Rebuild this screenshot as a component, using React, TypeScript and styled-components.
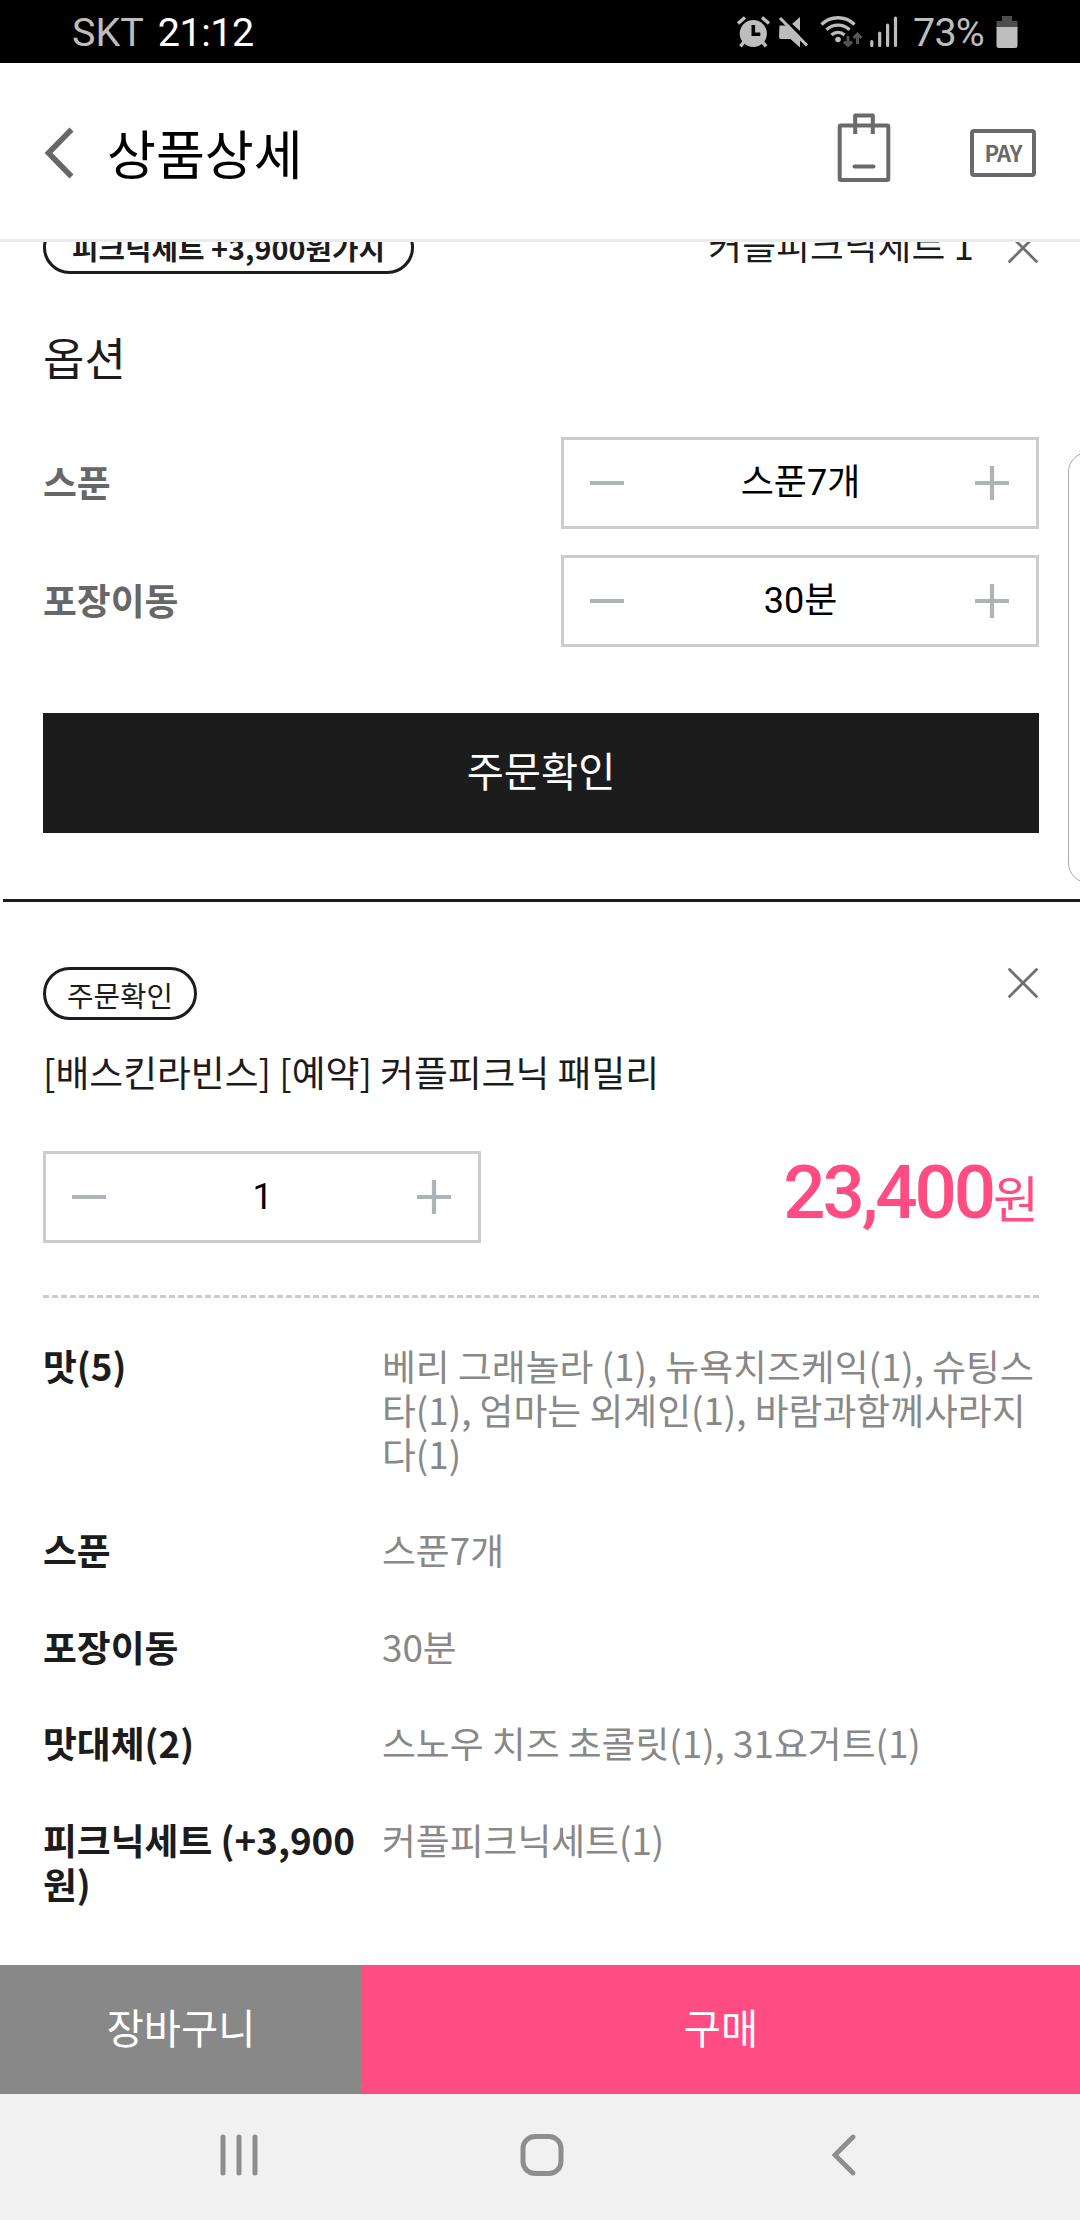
import React from 'react';
import styled, { createGlobalStyle } from 'styled-components';

const noto = `'Noto Sans CJK KR', 'Noto Sans KR', sans-serif`;
const roboto = `Roboto, 'Noto Sans CJK KR', sans-serif`;

const GlobalStyle = createGlobalStyle`
  * { box-sizing: border-box; }
  body { margin: 0; background: #fff; font-family: ${noto}; color: #1c1c1c; }
  button { border: 0; padding: 0; margin: 0; background: none; font: inherit; color: inherit; }
`;

const Screen = styled.div`
  width: 1080px;
  height: 2220px;
  display: flex;
  flex-direction: column;
  overflow: hidden;
  position: relative;
  background: #fff;
`;

const StatusBar = styled.div`
  height: 63px;
  flex: none;
  background: #000;
  display: flex;
  align-items: center;
  justify-content: space-between;
  padding: 2px 62px 0 72px;
  font-family: ${roboto};
  font-size: 39.5px;
  line-height: 60px;
  color: #bdbdbd;
`;

const StatusGroup = styled.div`
  display: flex;
  align-items: center;

  svg {
    margin-bottom: 1px;
  }
`;

const Clock = styled.span`
  color: #fff;
  margin-left: 14px;
  letter-spacing: -0.5px;
`;

const Percent = styled.span`
  margin: 0 12px 0 15px;
  letter-spacing: -0.8px;
`;

const Header = styled.header`
  height: 179px;
  flex: none;
  display: flex;
  align-items: center;
  border-bottom: 3px solid #ebebeb;
  padding: 4px 44px 0 44px;
`;

const HeaderTitle = styled.h1`
  flex: 1;
  margin: 0 0 3px 32px;
  font-weight: 400;
  font-size: 53.2px;
  line-height: 60px;
  color: #000;
`;

const IconButton = styled.button`
  display: flex;
`;

const BagButton = styled(IconButton)`
  margin-bottom: 11px;
`;

const PayIcon = styled.span`
  display: flex;
  align-items: center;
  justify-content: center;
  width: 66px;
  height: 48px;
  margin-left: 79px;
  margin-bottom: 1px;
  padding-bottom: 2px;
  border: 4px solid #6a6a6a;
  border-radius: 4px;
  font-size: 22px;
  font-weight: 700;
  line-height: 22px;
  color: #6a6a6a;
  letter-spacing: -0.9px;
`;

const Main = styled.main`
  flex: 1;
  min-height: 0;
  overflow: hidden;
`;

const Section = styled.section`
  padding: 0 41px 0 43px;
  display: flex;
  flex-direction: column;
`;

const PickedRow = styled.div`
  display: flex;
  align-items: center;
  height: 53px;
  margin-top: -21px;
`;

const Pill = styled.span<{ $strong?: boolean }>`
  display: flex;
  align-items: center;
  justify-content: center;
  height: 53px;
  width: ${(p) => (p.$strong ? 371 : 154)}px;
  padding-top: ${(p) => (p.$strong ? 0 : 3)}px;
  border: 3px solid #1c1c1c;
  border-radius: 27px;
  font-size: 28.8px;
  line-height: 40px;
  font-weight: ${(p) => (p.$strong ? 700 : 400)};
  white-space: nowrap;
`;

const PickedName = styled.span`
  margin: 0 33px 8px auto;
  font-size: 36.8px;
  line-height: 44px;
  white-space: nowrap;
`;

const OptionTitle = styled.h2`
  margin: 53px 0 1px;
  font-size: 45px;
  line-height: 60px;
  font-weight: 400;
`;

const OptionList = styled.div`
  margin-top: 49px;
  display: flex;
  flex-direction: column;
  gap: 26px;
`;

const OptionRow = styled.div`
  display: flex;
  align-items: center;
  justify-content: space-between;
`;

const OptionLabel = styled.span`
  margin-bottom: 4px;
  font-size: 36.8px;
  line-height: 44px;
  font-weight: 700;
  color: #676767;
`;

const StepperBox = styled.div<{ $width: number }>`
  display: flex;
  align-items: center;
  justify-content: space-between;
  width: ${(p) => p.$width}px;
  height: 92px;
  padding: 0 27px 0 26px;
  border: 3px solid #ccc;
`;

const StepperValue = styled.span`
  margin-left: 2px;
  font-family: ${roboto};
  font-size: 36px;
  line-height: 44px;
  color: #000;
`;

const ConfirmButton = styled.button`
  margin-top: 66px;
  height: 120px;
  background: #1c1c1c;
  color: #fff;
  font-size: 40.4px;
  line-height: 60px;
  padding-bottom: 6px;
`;

const Divider = styled.div`
  height: 3px;
  margin: 66px 0 65px 3px;
  background: #1c1c1c;
`;

const OrderHead = styled.div`
  display: flex;
  align-items: flex-start;
  justify-content: space-between;
`;

const OrderName = styled.div`
  margin-top: 29px;
  font-size: 36.8px;
  line-height: 44px;
  white-space: nowrap;
`;

const PriceRow = styled.div`
  margin-top: 58px;
  display: flex;
  justify-content: space-between;
  height: 147px;
  border-bottom: 3px dashed #ccc;
`;

const Price = styled.div`
  display: flex;
  align-items: baseline;
  height: 92px;
  margin-top: -4px;
  line-height: 92px;
  color: #ff4c82;
`;

const Amount = styled.span`
  font-family: Roboto, sans-serif;
  font-size: 74.5px;
  font-weight: 500;
  letter-spacing: -3.1px;
`;

const Won = styled.span`
  font-size: 50px;
  font-weight: 400;
`;

const Details = styled.dl`
  margin: 45px 0 0;
  display: grid;
  grid-template-columns: 339px 1fr;
  row-gap: 52.4px;
  font-size: 36.8px;
  line-height: 44px;
`;

const Term = styled.dt`
  font-weight: 700;
  padding-right: 20px;
`;

const Desc = styled.dd`
  margin: 0;
  color: #888;
  word-break: break-all;
`;

const Actions = styled.div`
  flex: none;
  height: 129px;
  display: grid;
  grid-template-columns: 362px 1fr;
`;

const ActionButton = styled.button<{ $primary?: boolean }>`
  background: ${(p) => (p.$primary ? '#ff4c82' : '#888')};
  color: #fff;
  font-size: 40.4px;
  line-height: 60px;
  padding-bottom: 6px;
`;

const NavBar = styled.nav`
  flex: none;
  height: 126px;
  background: #f1f1f1;
  display: flex;
  align-items: center;
  justify-content: space-between;
  padding: 0 223px 4px 220px;

  svg:nth-child(2) {
    margin-right: 5px;
  }
`;

const EdgeHandle = styled.div`
  position: absolute;
  left: 1068px;
  top: 452px;
  width: 60px;
  height: 431px;
  border: 1.5px solid #ababab;
  border-radius: 20px;
  background: #fff;
`;

const AlarmIcon = () => (
  <svg width="33" height="32" viewBox="0 0 33 32">
    <circle cx="16.3" cy="17.5" r="13.6" fill="#bdbdbd" />
    <path d="M1 7.5L8 1.5M32 7.5L25 1.5" stroke="#bdbdbd" strokeWidth="3.4" />
    <path d="M7 26l-3.6 4.4M25.5 26l3.6 4.4" stroke="#bdbdbd" strokeWidth="3.4" />
    <path d="M16.3 9v9.2h7" stroke="#000" strokeWidth="3.6" fill="none" />
  </svg>
);

const MuteSvg = styled.svg`
  margin-left: 8px;
`;

const MuteIcon = () => (
  <MuteSvg width="31" height="32" viewBox="0 0 31 32">
    <path d="M1.500 9.500h7.500l3-2.500L22 17v14.500l-9.500-8.500H3a2 2 0 0 1-2-2z M22 1v14l-8-7z" fill="#bdbdbd" />
    <path d="M4 0l27 27.500" stroke="#000" strokeWidth="3" />
    <path d="M2 2l27 27.500" stroke="#bdbdbd" strokeWidth="3.2" />
  </MuteSvg>
);

const WifiSvg = styled.svg`
  margin-left: 11px;
`;

const WifiIcon = () => (
  <WifiSvg width="43" height="32" viewBox="0 0 43 32">
    <g fill="none" stroke="#bdbdbd" strokeWidth="3.3">
      <path d="M1.5 8.500a23.5 23.5 0 0 1 33 0" />
      <path d="M6.5 13.800a16.5 16.5 0 0 1 23 0" />
      <path d="M11.5 19a9.5 9.5 0 0 1 13 0" />
    </g>
    <circle cx="18" cy="23.500" r="2.8" fill="#bdbdbd" />
    <g fill="none" stroke="#555" strokeWidth="3">
      <path d="M28 20v10M24 25.5l4 4 4-4" />
      <path d="M37.500 28V18M33.500 22l4-4 4 4" />
    </g>
  </WifiSvg>
);

const SignalSvg = styled.svg`
  margin-left: 7px;
`;

const SignalIcon = () => (
  <SignalSvg width="28" height="32" viewBox="0 0 28 32">
    <path
      d="M1.800 25.500v4M9.700 17v12.500M17.600 9v20.500M25.500 2v27.500"
      stroke="#bdbdbd"
      strokeWidth="3.2"
      strokeLinecap="round"
    />
  </SignalSvg>
);

const BatteryIcon = () => (
  <svg width="22" height="34" viewBox="0 0 22 34">
    <path d="M6 1h10v5h5.500v7H.5V6H6z" fill="#4d4d4d" />
    <path d="M.5 12h21v18.500a2.500 2.500 0 0 1-2.500 2.500H3a2.500 2.500 0 0 1-2.500-2.500z" fill="#bdbdbd" />
  </svg>
);

const BackIcon = () => (
  <svg width="31" height="52" viewBox="0 0 31 52">
    <path d="M27.500 2.500L4.500 26l23 23.500" fill="none" stroke="#676767" strokeWidth="5.600" />
  </svg>
);

const BagIcon = () => (
  <svg width="54" height="70" viewBox="0 0 54 70">
    <g fill="none" stroke="#6a6a6a" strokeWidth="4" strokeLinejoin="round">
      <rect x="2.700" y="12.500" width="48.600" height="54.500" rx="1" />
      <path d="M18.200 21V2.500h17.600V21" />
      <path d="M17.500 53.500h19" strokeLinecap="round" />
    </g>
  </svg>
);

const CloseIcon = () => (
  <svg width="32" height="32" viewBox="0 0 32 32">
    <path d="M2.500 2.500l27 27M29.500 2.500l-27 27" stroke="#707070" strokeWidth="2.800" strokeLinecap="round" />
  </svg>
);

const MinusIcon = () => (
  <svg width="34" height="34" viewBox="0 0 34 34">
    <path d="M0 17h34" stroke="#adb3b7" strokeWidth="4.200" />
  </svg>
);

const PlusIcon = () => (
  <svg width="34" height="34" viewBox="0 0 34 34">
    <path d="M0 17h34M17 0v34" stroke="#adb3b7" strokeWidth="4.200" />
  </svg>
);

function Stepper({ value, width }: { value: string; width: number }) {
  return (
    <StepperBox $width={width}>
      <IconButton><MinusIcon /></IconButton>
      <StepperValue>{value}</StepperValue>
      <IconButton><PlusIcon /></IconButton>
    </StepperBox>
  );
}

const options = [
  { label: '스푼', value: '스푼7개' },
  { label: '포장이동', value: '30분' },
];

const details = [
  { term: '맛(5)', desc: '베리 그래놀라 (1), 뉴욕치즈케익(1), 슈팅스타(1), 엄마는 외계인(1), 바람과함께사라지다(1)' },
  { term: '스푼', desc: '스푼7개' },
  { term: '포장이동', desc: '30분' },
  { term: '맛대체(2)', desc: '스노우 치즈 초콜릿(1), 31요거트(1)' },
  { term: '피크닉세트 (+3,900원)', desc: '커플피크닉세트(1)' },
];

export default function App() {
  return (
    <>
      <GlobalStyle />
      <Screen>
        <StatusBar>
          <StatusGroup>
            <span>SKT</span>
            <Clock>21:12</Clock>
          </StatusGroup>
          <StatusGroup>
            <AlarmIcon />
            <MuteIcon />
            <WifiIcon />
            <SignalIcon />
            <Percent>73%</Percent>
            <BatteryIcon />
          </StatusGroup>
        </StatusBar>

        <Header>
          <IconButton><BackIcon /></IconButton>
          <HeaderTitle>상품상세</HeaderTitle>
          <BagButton><BagIcon /></BagButton>
          <PayIcon>PAY</PayIcon>
        </Header>

        <Main>
          <Section>
            <PickedRow>
              <Pill $strong>피크닉세트 +3,900원가지</Pill>
              <PickedName>커플피크닉세트 1</PickedName>
              <IconButton><CloseIcon /></IconButton>
            </PickedRow>
            <OptionTitle>옵션</OptionTitle>
            <OptionList>
              {options.map((o) => (
                <OptionRow key={o.label}>
                  <OptionLabel>{o.label}</OptionLabel>
                  <Stepper value={o.value} width={478} />
                </OptionRow>
              ))}
            </OptionList>
            <ConfirmButton>주문확인</ConfirmButton>
          </Section>

          <Divider />

          <Section>
            <OrderHead>
              <Pill>주문확인</Pill>
              <IconButton><CloseIcon /></IconButton>
            </OrderHead>
            <OrderName>[배스킨라빈스] [예약] 커플피크닉 패밀리</OrderName>
            <PriceRow>
              <Stepper value="1" width={438} />
              <Price>
                <Amount>23,400</Amount>
                <Won>원</Won>
              </Price>
            </PriceRow>
            <Details>
              {details.map((d) => (
                <React.Fragment key={d.term}>
                  <Term>{d.term}</Term>
                  <Desc>{d.desc}</Desc>
                </React.Fragment>
              ))}
            </Details>
          </Section>
        </Main>

        <Actions>
          <ActionButton>장바구니</ActionButton>
          <ActionButton $primary>구매</ActionButton>
        </Actions>

        <NavBar>
          <svg width="38" height="42" viewBox="0 0 38 42">
            <path d="M3 3v36M19 3v36M35 3v36" stroke="#8e8e8e" strokeWidth="5" strokeLinecap="round" />
          </svg>
          <svg width="44" height="44" viewBox="0 0 44 44">
            <rect x="3" y="3.500" width="38" height="37" rx="12" fill="none" stroke="#8e8e8e" strokeWidth="5" />
          </svg>
          <svg width="26" height="42" viewBox="0 0 26 42">
            <path d="M22 3L4 21l18 18" fill="none" stroke="#8e8e8e" strokeWidth="4.800" strokeLinecap="round" />
          </svg>
        </NavBar>
        <EdgeHandle />
      </Screen>
    </>
  );
}
